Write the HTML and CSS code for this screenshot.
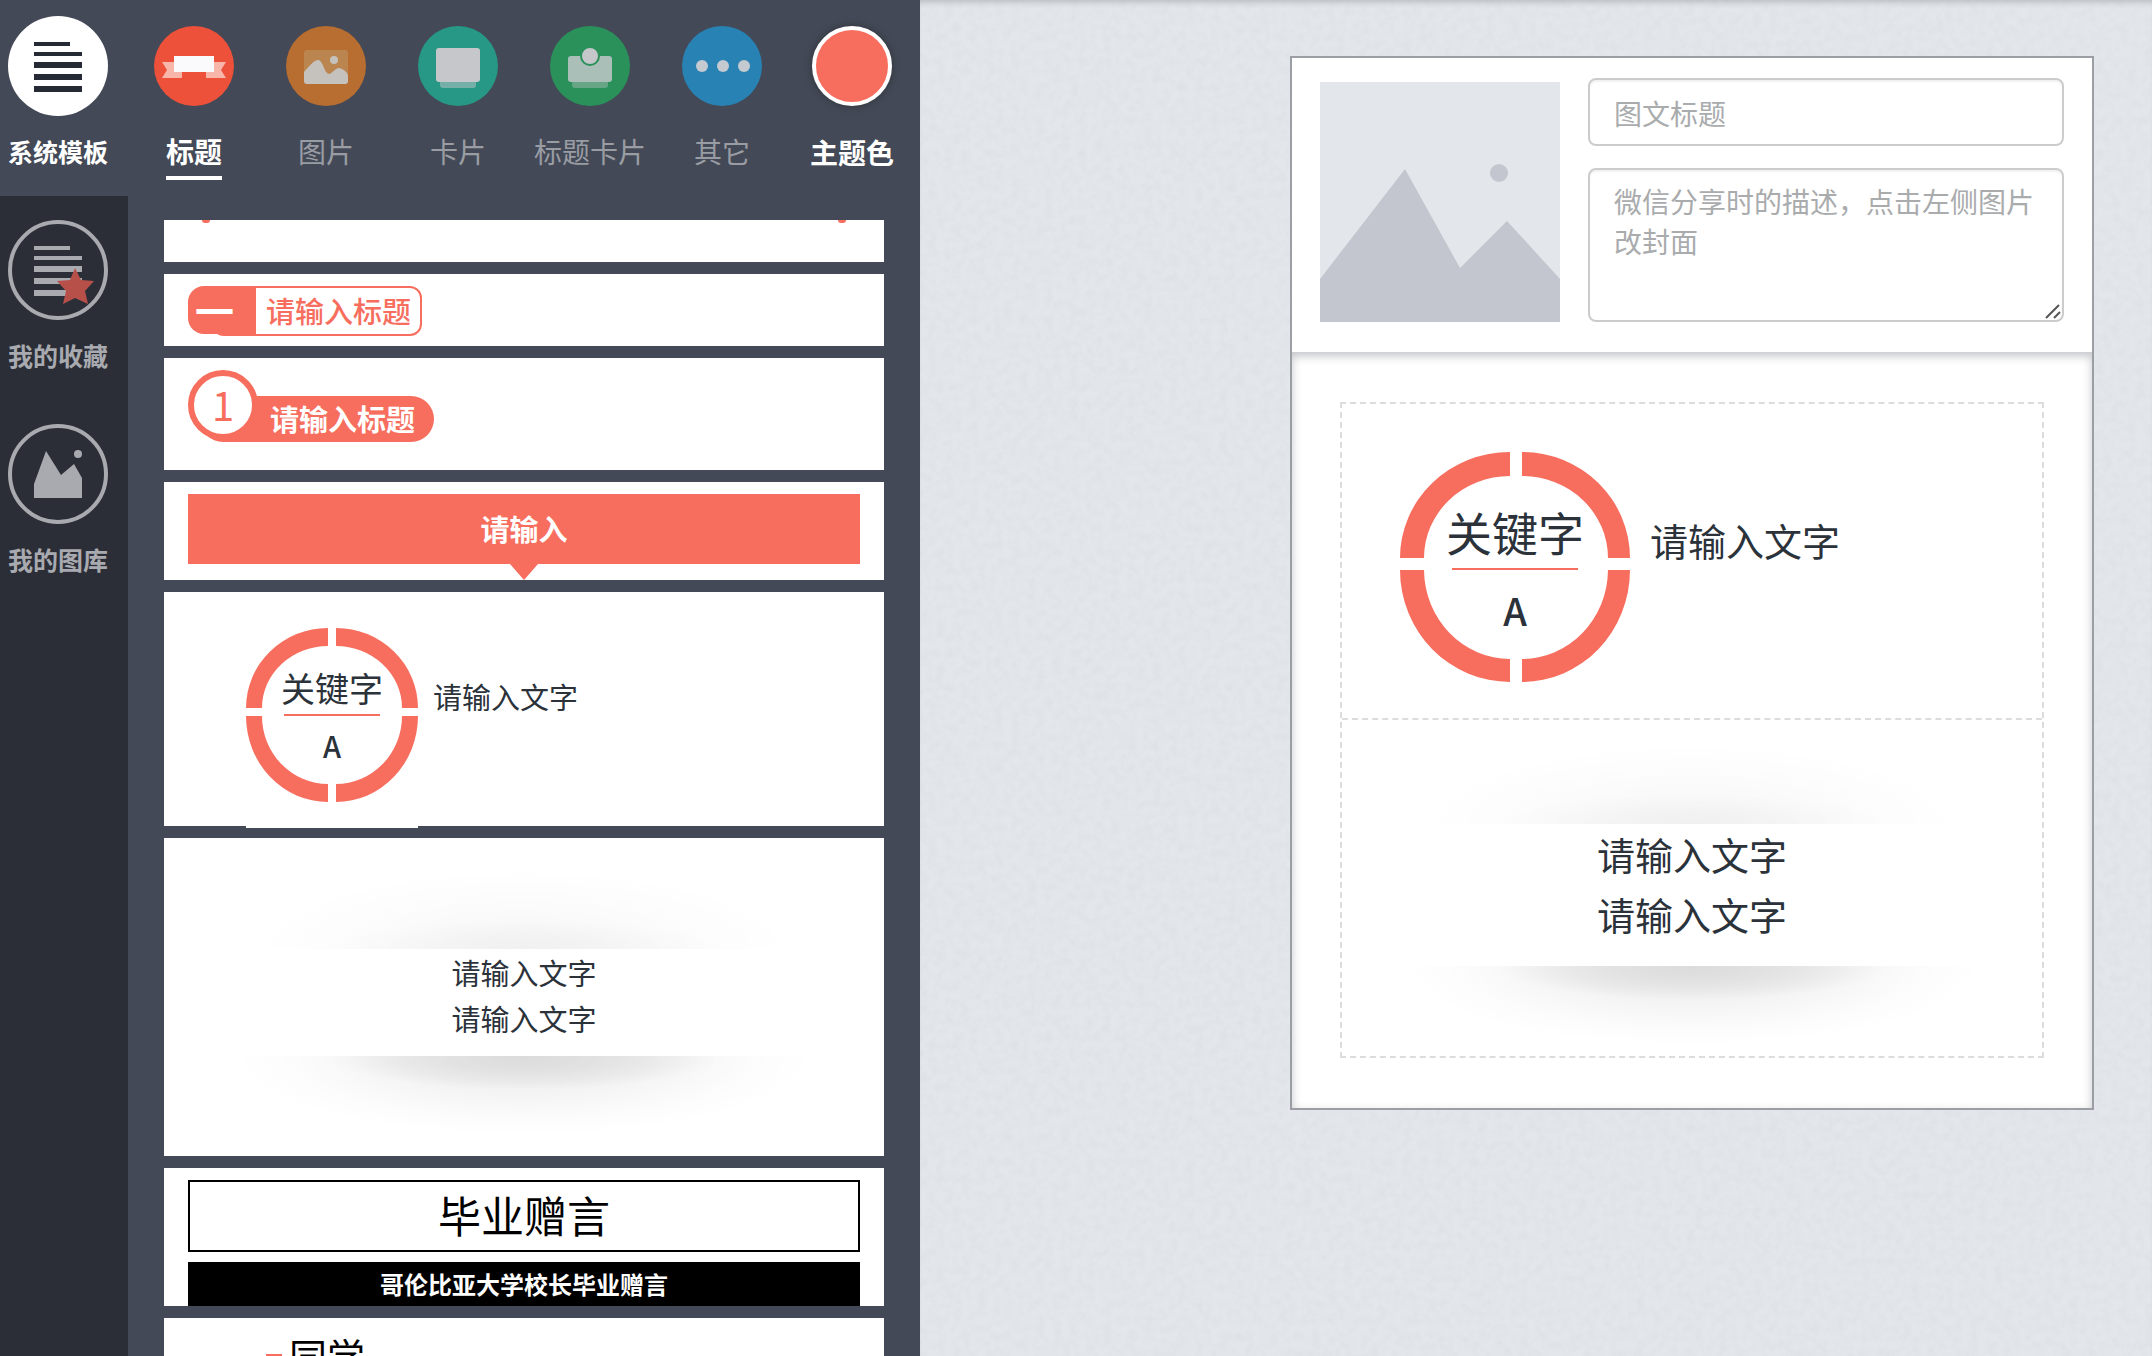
FILE: index.html
```html
<!DOCTYPE html>
<html lang="zh-CN">
<head>
<meta charset="utf-8">
<title>图文编辑器</title>
<link rel="stylesheet" href="styles.css">
</head>
<body>
<div class="app">
  <nav class="side">
    <a class="side-item active" href="#system">
      <svg viewBox="0 0 100 100"><circle cx="50" cy="50" r="50" fill="#fff"/><path fill="#252a34" d="M26 26h36v4H26zM26 36h48v4H26zM26 46h48v6H26zM26 58h48v6H26zM26 70h48v6H26z"/></svg>
      <span>系统模板</span>
    </a>
    <a class="side-item" href="#favorites">
      <svg viewBox="0 0 100 100"><circle cx="50" cy="50" r="48" fill="none" stroke="#a8aab0" stroke-width="4"/><path fill="#a8aab0" d="M26 26h36v4H26zM26 36h48v4H26zM26 46h48v6H26zM26 58h48v6H26zM26 70h48v6H26z"/><path fill="#b8504a" d="M67 48l6 12 13 1-9 10 3 13-13-6-12 6 3-13-9-10 13-1z"/></svg>
      <span>我的收藏</span>
    </a>
    <a class="side-item" href="#gallery">
      <svg viewBox="0 0 100 100"><circle cx="50" cy="50" r="48" fill="none" stroke="#a8aab0" stroke-width="4"/><path fill="#a8aab0" d="M38 27L53 51 66 40 74 54V74H26V60z"/><circle cx="70" cy="30" r="4" fill="#a8aab0"/></svg>
      <span>我的图库</span>
    </a>
  </nav>

  <section class="library">
    <div class="tabs">
      <button class="tab active" type="button">
        <svg viewBox="0 0 80 80"><circle cx="40" cy="40" r="40" fill="#ed513a"/><path fill="#f8b5aa" d="M8 36h20v16H8l5-8zM72 36H52v16h20l-5-8z"/><path fill="#fafafc" d="M20 30h40v16H20z"/></svg>
        <span>标题</span>
      </button>
      <button class="tab" type="button">
        <svg viewBox="0 0 80 80"><circle cx="40" cy="40" r="40" fill="#b86d31"/><rect x="18" y="24" width="44" height="34" rx="3" fill="#bb854f"/><path fill="#c5c2bd" d="M18 46C24 39 29 33 33 34C38 37 38 47 43 48C46 48 49 42 53 42C57 43 62 46 62 50V55Q62 58 59 58H21Q18 58 18 55z"/><circle cx="48" cy="34" r="4" fill="#c5c2bd"/></svg>
        <span>图片</span>
      </button>
      <button class="tab" type="button">
        <svg viewBox="0 0 80 80"><circle cx="40" cy="40" r="40" fill="#279786"/><rect x="22" y="50" width="36" height="12" rx="3" fill="#74b0a8"/><rect x="18" y="22" width="44" height="34" rx="3" fill="#c5c7cb"/></svg>
        <span>卡片</span>
      </button>
      <button class="tab" type="button">
        <svg viewBox="0 0 80 80"><circle cx="40" cy="40" r="40" fill="#2b915b"/><rect x="22" y="50" width="36" height="12" rx="3" fill="#66a586"/><rect x="18" y="30" width="44" height="26" rx="3" fill="#a9bfb8"/><circle cx="40" cy="30" r="9" fill="#c5c7cb" stroke="#2b915b" stroke-width="2"/></svg>
        <span>标题卡片</span>
      </button>
      <button class="tab" type="button">
        <svg viewBox="0 0 80 80"><circle cx="40" cy="40" r="40" fill="#2882b3"/><g fill="#c5c9d0"><circle cx="20" cy="40" r="6"/><circle cx="41" cy="40" r="6"/><circle cx="62" cy="40" r="6"/></g></svg>
        <span>其它</span>
      </button>
      <button class="tab theme" type="button">
        <i class="swatch"></i>
        <span>主题色</span>
      </button>
    </div>

    <div class="cards">
      <article class="card card-tail"><i class="dot"></i><i class="dot"></i></article>

      <article class="card">
        <div class="numbered"><b>一</b><span>请输入标题</span></div>
      </article>

      <article class="card card-pill">
        <div class="pill"><b>1</b><span>请输入标题</span></div>
      </article>

      <article class="card card-banner">
        <div class="banner">请输入</div>
      </article>

      <article class="card card-ring">
        <div class="keyword">
          <div class="ring">
            <svg viewBox="0 0 172 174"><path d="M0 80A82 80 0 0 1 82 0V18A66 62 0 0 0 16 80zM172 80A82 80 0 0 0 90 0V18A66 62 0 0 1 156 80zM0 88A82 86 0 0 0 82 174V156A66 68 0 0 1 16 88zM172 88A82 86 0 0 1 90 174V156A66 68 0 0 0 156 88z"/></svg>
            <strong>关键字</strong>
            <em>A</em>
          </div>
          <p>请输入文字</p>
        </div>
      </article>

      <article class="card card-lift">
        <div class="lift"><p>请输入文字</p><p>请输入文字</p></div>
      </article>

      <article class="card card-speech">
        <h2>毕业赠言</h2>
        <h3>哥伦比亚大学校长毕业赠言</h3>
      </article>

      <article class="card card-last">
        <i class="mark"></i><span>同学</span>
      </article>
    </div>
  </section>

  <main class="stage">
    <svg class="grain" aria-hidden="true"><filter id="paper" x="0" y="0" width="100%" height="100%"><feTurbulence type="fractalNoise" baseFrequency="0.12" numOctaves="3" seed="4"/><feColorMatrix values="0 0 0 0 0.45  0 0 0 0 0.48  0 0 0 0 0.52  0.2 0 0 0 -0.07"/></filter><rect width="100%" height="100%" filter="url(#paper)"/></svg>
    <div class="editor">
      <form class="meta">
        <button class="cover" type="button" aria-label="封面">
          <svg viewBox="0 0 240 240"><path fill="#e3e6ea" d="M0 0h240v240H0z"/><path fill="#c3c6ce" d="M0 197L85 87 140 186 187 139 240 197V240H0z"/><circle cx="179" cy="91" r="9" fill="#c3c6ce"/></svg>
        </button>
        <div class="fields">
          <input type="text" aria-label="图文标题" placeholder="图文标题">
          <div class="area">
            <textarea aria-label="分享描述" placeholder="微信分享时的描述，点击左侧图片改封面"></textarea>
            <svg class="grip" viewBox="0 0 16 16"><path d="M1 15L14 2M9 15L15 9" stroke="#555" stroke-width="2"/></svg>
          </div>
        </div>
      </form>
      <div class="canvas">
        <div class="blocks">
          <div class="block block-ring">
            <div class="keyword">
              <div class="ring">
                <svg viewBox="0 0 230 230"><path d="M0 106A110 106 0 0 1 110 0V24A86 82 0 0 0 24 106zM230 106A108 106 0 0 0 122 0V24A86 82 0 0 1 208 106zM0 118A110 112 0 0 0 110 230V207A86 90 0 0 1 24 118zM230 118A108 112 0 0 1 122 230V207A86 90 0 0 0 208 118z"/></svg>
                <strong>关键字</strong>
                <em>A</em>
              </div>
              <p>请输入文字</p>
            </div>
          </div>
          <div class="block block-lift">
            <div class="lift"><p>请输入文字</p><p>请输入文字</p></div>
          </div>
        </div>
      </div>
    </div>
  </main>
</div>
</body>
</html>
```
FILE: styles.css
```css
* { box-sizing: border-box; }

:root {
  --theme: #f76e5e;
  --panel: #434956;
  --ink: #2b323a;
}

body, p, h2, h3 { margin: 0; }

body {
  font-family: "Noto Sans CJK SC", "Liberation Sans", sans-serif;
  color: var(--ink);
}

button, input, textarea { font: inherit; }
button { padding: 0; border: 0; background: none; cursor: pointer; }
svg { display: block; }

.app {
  display: grid;
  grid-template-columns: 128px 792px 1fr;
  height: 100vh;
  overflow: hidden;
}

/* side navigation */
.side {
  display: flex;
  flex-direction: column;
  gap: 8px;
  background: #2b2e37;
}
.side-item {
  display: flex;
  flex-direction: column;
  gap: 17px;
  height: 196px;
  padding: 16px 20px 0 8px;
  color: #a8aab0;
  font-size: 25px;
  font-weight: 700;
  line-height: 36px;
  text-decoration: none;
  white-space: nowrap;
}
.side-item svg { width: 100px; height: 100px; }
.side-item.active { background: var(--panel); color: #fff; }

/* template library */
.library {
  display: flex;
  flex-direction: column;
  min-height: 0;
  background: var(--panel);
}
.tabs {
  display: flex;
  flex: none;
  height: 220px;
  padding-top: 26px;
}
.tab {
  display: flex;
  flex-direction: column;
  align-items: center;
  gap: 26px;
  width: 132px;
  color: #999ca3;
  font-size: 28px;
  line-height: 38px;
}
.tab svg, .swatch { width: 80px; height: 80px; }
.tab span { height: 48px; }
.tab.active { color: #fff; font-weight: 700; }
.tab.active span { border-bottom: 4px solid #fff; }
.tab.theme { width: 128px; color: #fff; font-weight: 700; line-height: 40px; }
.swatch {
  border: 4px solid #fff;
  border-radius: 50%;
  background: var(--theme);
  box-shadow: 0 0 8px rgba(0, 0, 0, .3);
}

.cards {
  display: flex;
  flex: 1;
  flex-direction: column;
  gap: 12px;
  min-height: 0;
  padding: 0 36px;
  overflow: hidden;
}
.card {
  flex: none;
  padding: 12px 24px;
  background: #fff;
  font-size: 29px;
}
.card-tail {
  display: flex;
  justify-content: space-between;
  height: 42px;
  padding: 0 38px;
}
.dot {
  width: 8px;
  height: 3px;
  border-radius: 0 0 4px 4px;
  background: var(--theme);
}

.numbered {
  display: flex;
  height: 48px;
  color: var(--theme);
}
.numbered b {
  z-index: 1;
  width: 68px;
  padding-left: 7px;
  border-radius: 16px 0 0 16px;
  background: var(--theme);
  color: #fff;
  font-size: 39px;
  font-weight: 700;
  line-height: 46px;
}
.numbered span {
  height: 50px;
  margin-left: -44px;
  padding: 0 9px 0 52px;
  border: 2px solid var(--theme);
  border-radius: 12px;
  background: linear-gradient(to right, var(--theme) 42px, #fff 42px);
  font-weight: 500;
  line-height: 44px;
}

.card-pill { height: 112px; }
.pill { display: flex; align-items: flex-start; }
.pill b {
  z-index: 1;
  width: 70px;
  height: 70px;
  border: 6px solid var(--theme);
  border-radius: 50%;
  background: #fff;
  color: var(--theme);
  font-size: 40px;
  font-weight: 400;
  line-height: 56px;
  text-align: center;
}
.pill span {
  height: 46px;
  margin: 26px 0 0 -58px;
  padding: 0 19px 0 70px;
  border-radius: 23px;
  background: var(--theme);
  color: #fff;
  font-weight: 700;
  line-height: 44px;
}

.card-banner { height: 98px; }
.banner {
  height: 70px;
  background: var(--theme);
  color: #fff;
  font-weight: 700;
  line-height: 68px;
  text-align: center;
}
.banner::after {
  display: block;
  width: 28px;
  height: 16px;
  margin: 2px auto 0;
  background: var(--theme);
  clip-path: polygon(0 0, 100% 0, 50% 100%);
  content: "";
}

/* keyword ring, shared by the library and the canvas */
.keyword { display: flex; gap: 15px; }
.ring {
  display: grid;
  grid-template-columns: 1fr;
  grid-template-rows: 86px 1fr;
  justify-items: center;
  width: 172px;
  height: 174px;
}
.ring svg {
  grid-area: 1 / 1 / 3 / 2;
  width: 100%;
  height: 100%;
  fill: var(--theme);
}
.ring strong {
  display: flex;
  grid-area: 1 / 1;
  align-self: end;
  justify-content: center;
  width: 96px;
  height: 48px;
  margin-bottom: -2px;
  border-bottom: 2px solid var(--theme);
  font-size: 34px;
  font-weight: 400;
  line-height: 40px;
  white-space: nowrap;
}
.ring em {
  grid-area: 2 / 1;
  margin-top: 9px;
  font-style: normal;
  font-weight: 500;
  line-height: 44px;
}
.keyword p { margin-top: 46px; line-height: 44px; }

.card-ring { height: 234px; padding: 36px 82px 0; }
.card-ring .ring {
  box-sizing: content-box;
  padding-bottom: 26px;
  background: #fff;
}

/* text strip lifted off the page by soft shadows */
.card-lift { height: 318px; padding: 0; }
.lift {
  display: flex;
  flex-direction: column;
  height: 100%;
  text-align: center;
  line-height: 46px;
}
.lift::before, .lift::after { content: ""; }
.lift::before {
  height: 111px;
  background:
    radial-gradient(ellipse 200px 30px at 50% 100%, rgba(0, 0, 0, .02) 40%, transparent),
    radial-gradient(ellipse 270px 80px at 50% 100%, rgba(0, 0, 0, .04), rgba(0, 0, 0, .02) 45%, transparent);
}
.lift::after {
  flex: 1;
  margin-top: 15px;
  background:
    radial-gradient(ellipse 195px 34px at 50% 0, rgba(0, 0, 0, .08), rgba(0, 0, 0, .06) 45%, rgba(0, 0, 0, .03) 75%, transparent),
    radial-gradient(ellipse 290px 80px at 50% 0, rgba(0, 0, 0, .07), rgba(0, 0, 0, .05) 40%, rgba(0, 0, 0, .01) 80%, transparent);
}

.card-speech {
  display: flex;
  flex-direction: column;
  gap: 10px;
  padding-bottom: 0;
  text-align: center;
}
.card-speech h2 {
  height: 72px;
  border: 2px solid #000;
  color: #000;
  font-size: 43px;
  font-weight: 400;
  line-height: 64px;
}
.card-speech h3 {
  height: 44px;
  background: #000;
  color: #fff;
  font-size: 24px;
  font-weight: 700;
  line-height: 44px;
}

.card-last {
  display: flex;
  gap: 7px;
  height: 120px;
  padding: 12px 102px;
  color: #000;
  font-size: 38px;
  line-height: 50px;
}
.mark {
  width: 16px;
  height: 16px;
  margin-top: 24px;
  background: var(--theme);
}

/* editing stage */
.stage {
  position: relative;
  display: flex;
  justify-content: flex-end;
  align-items: flex-start;
  padding: 56px 58px;
  background: #e3e7eb;
  box-shadow: inset 0 6px 6px -4px rgba(0, 0, 0, .2);
}
.grain {
  position: absolute;
  inset: 0;
  width: 100%;
  height: 100%;
}
.editor {
  position: relative;
  width: 804px;
  border: 2px solid #9b9fa5;
  background: #fff;
}
.meta {
  display: flex;
  gap: 28px;
  padding: 20px 28px 30px;
}
.cover { width: 240px; height: 240px; margin-top: 4px; }
.fields {
  display: flex;
  flex: 1;
  flex-direction: column;
  gap: 22px;
}
.fields input, .fields textarea {
  display: block;
  width: 100%;
  border: 2px solid #ccc;
  border-radius: 8px;
  background: #fff;
  box-shadow: inset 0 2px 2px rgba(0, 0, 0, .06);
  font-size: 28px;
}
.fields input { height: 68px; padding: 2px 24px 0; }
.fields textarea {
  height: 154px;
  padding: 11px 24px;
  line-height: 40px;
  resize: none;
}
.fields ::placeholder { color: #a9abad; opacity: 1; }
.area { position: relative; }
.grip {
  position: absolute;
  right: 3px;
  bottom: 3px;
  width: 16px;
  height: 16px;
}

.canvas {
  padding: 50px 48px;
  box-shadow: inset 0 4px 10px rgba(60, 64, 80, .3);
}
.blocks {
  border: 2px dashed #dcdcdc;
  font-size: 38px;
}
.block-ring {
  height: 316px;
  padding: 48px 58px;
  border-bottom: 2px dashed #dcdcdc;
}
.block .keyword { gap: 20px; }
.block .ring {
  grid-template-rows: 116px 1fr;
  width: 230px;
  height: 230px;
}
.block .ring strong {
  width: 126px;
  height: 62px;
  font-size: 46px;
  line-height: 46px;
}
.block .ring em { margin-top: 16px; line-height: 52px; }
.block .keyword p { margin-top: 62px; line-height: 52px; }
.block-lift { height: 336px; }
.block .lift { line-height: 60px; }
.block .lift::before { height: 104px; }
.block .lift::after { margin-top: 22px; }
```
